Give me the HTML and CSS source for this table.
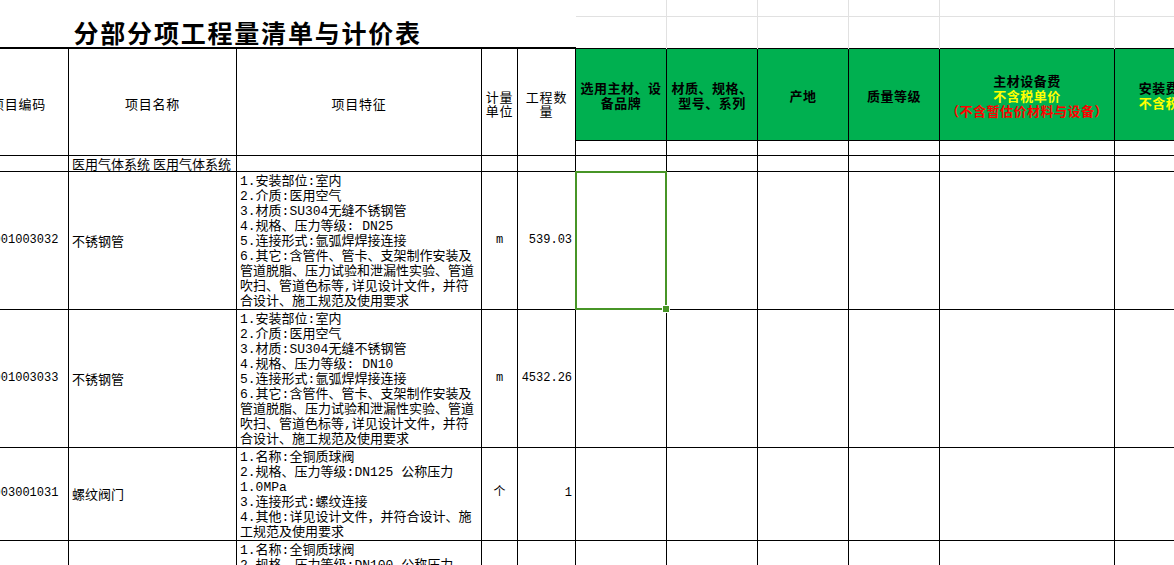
FILE: index.html
```html
<!DOCTYPE html>
<html lang="zh-CN">
<head>
<meta charset="utf-8">
<title>分部分项工程量清单与计价表</title>
<link rel="stylesheet" href="styles.css">
</head>
<body>
<table class="sheet">
  <colgroup>
    <col class="c-code"><col class="c-name"><col class="c-feat"><col class="c-unit"><col class="c-qty">
    <col class="c-g"><col class="c-g"><col class="c-g"><col class="c-g"><col class="c-wide"><col class="c-last">
  </colgroup>
  <tr class="r-top0">
    <td class="title" colspan="5" rowspan="2">分部分项工程量清单与计价表</td>
    <td class="grid g0 first"></td><td class="grid g0"></td><td class="grid g0"></td><td class="grid g0"></td><td class="grid g0"></td><td class="grid g0"></td>
  </tr>
  <tr class="r-top1">
    <td class="grid g1 first"></td><td class="grid g1"></td><td class="grid g1"></td><td class="grid g1"></td><td class="grid g1"></td><td class="grid g1"></td>
  </tr>
  <tr class="r-head">
    <td class="hd" rowspan="2">项目编码</td>
    <td class="hd" rowspan="2">项目名称</td>
    <td class="hd" rowspan="2">项目特征</td>
    <td class="hd narrow" rowspan="2">计量<br>单位</td>
    <td class="hd narrow" rowspan="2">工程数<br>量</td>
    <td class="gh">选用主材、设<br>备品牌</td>
    <td class="gh">材质、规格、<br>型号、系列</td>
    <td class="gh">产地</td>
    <td class="gh">质量等级</td>
    <td class="gh">主材设备费<br><span class="yel">不含税单价</span><br><span class="red">（不含暂估价材料与设备）</span></td>
    <td class="gh">安装费单价<br><span class="yel">不含税单价</span></td>
  </tr>
  <tr class="r-sub">
    <td class="cell"></td><td class="cell"></td><td class="cell"></td><td class="cell"></td><td class="cell"></td><td class="cell"></td>
  </tr>
  <tr class="r-group">
    <td class="cell"></td>
    <td class="cell txt">医用气体系统 医用气体系统</td>
    <td class="cell"></td><td class="cell"></td><td class="cell"></td>
    <td class="cell"></td><td class="cell"></td><td class="cell"></td><td class="cell"></td><td class="cell"></td><td class="cell"></td>
  </tr>
  <tr class="r-tall">
    <td class="cell code">031001003032</td>
    <td class="cell txt">不锈钢管</td>
    <td class="cell feat">1.安装部位:室内<br>2.介质:医用空气<br>3.材质:SU304无缝不锈钢管<br>4.规格、压力等级: DN25<br>5.连接形式:氩弧焊焊接连接<br>6.其它:含管件、管卡、支架制作安装及<br>管道脱脂、压力试验和泄漏性实验、管道<br>吹扫、管道色标等,详见设计文件，并符<br>合设计、施工规范及使用要求</td>
    <td class="cell ctr">m</td>
    <td class="cell num">539.03</td>
    <td class="cell selected"><div class="sel"></div><div class="handle"></div></td>
    <td class="cell"></td><td class="cell"></td><td class="cell"></td><td class="cell"></td><td class="cell"></td>
  </tr>
  <tr class="r-tall">
    <td class="cell code">031001003033</td>
    <td class="cell txt">不锈钢管</td>
    <td class="cell feat">1.安装部位:室内<br>2.介质:医用空气<br>3.材质:SU304无缝不锈钢管<br>4.规格、压力等级: DN10<br>5.连接形式:氩弧焊焊接连接<br>6.其它:含管件、管卡、支架制作安装及<br>管道脱脂、压力试验和泄漏性实验、管道<br>吹扫、管道色标等,详见设计文件，并符<br>合设计、施工规范及使用要求</td>
    <td class="cell ctr">m</td>
    <td class="cell num">4532.26</td>
    <td class="cell"></td><td class="cell"></td><td class="cell"></td><td class="cell"></td><td class="cell"></td><td class="cell"></td>
  </tr>
  <tr class="r-mid">
    <td class="cell code">031003001031</td>
    <td class="cell txt">螺纹阀门</td>
    <td class="cell feat">1.名称:全铜质球阀<br>2.规格、压力等级:DN125 公称压力<br>1.0MPa<br>3.连接形式:螺纹连接<br>4.其他:详见设计文件，并符合设计、施<br>工规范及使用要求</td>
    <td class="cell ctr">个</td>
    <td class="cell num">1</td>
    <td class="cell"></td><td class="cell"></td><td class="cell"></td><td class="cell"></td><td class="cell"></td><td class="cell"></td>
  </tr>
  <tr class="r-mid">
    <td class="cell code">031003001032</td>
    <td class="cell txt">螺纹阀门</td>
    <td class="cell feat">1.名称:全铜质球阀<br>2.规格、压力等级:DN100 公称压力<br>1.0MPa<br>3.连接形式:螺纹连接<br>4.其他:详见设计文件，并符合设计、施<br>工规范及使用要求</td>
    <td class="cell ctr">个</td>
    <td class="cell num">2</td>
    <td class="cell"></td><td class="cell"></td><td class="cell"></td><td class="cell"></td><td class="cell"></td><td class="cell"></td>
  </tr>
</table>
</body>
</html>
```

FILE: styles.css
```css
html, body {
  margin: 0;
  padding: 0;
  background: #fff;
  overflow: hidden;
}
body {
  width: 1174px;
  height: 565px;
  font-family: "Liberation Mono", "Noto Sans CJK SC", monospace;
  font-size: 13px;
  color: #000;
}
.sheet {
  border-collapse: collapse;
  table-layout: fixed;
  margin-left: -32px;
  width: 1262px;
}
.sheet td {
  padding: 0;
  overflow: hidden;
  white-space: nowrap;
}
.c-code { width: 100px; }
.c-name { width: 168px; }
.c-feat { width: 245px; }
.c-unit { width: 36px; }
.c-qty { width: 58px; }
.c-g { width: 91px; }
.c-wide { width: 175px; }
.c-last { width: 116px; }

.r-top0 { height: 16px; }
.r-top1 { height: 32px; }
.r-head { height: 92px; }
.r-sub { height: 15px; }
.r-group { height: 15px; }
.r-tall { height: 138px; }
.r-mid { height: 92px; }

.title {
  font-family: "Noto Sans CJK SC", sans-serif;
  font-weight: 700;
  font-size: 25px;
  letter-spacing: 1.8px;
  line-height: 28px;
  vertical-align: bottom;
  padding-left: 105px !important;
  padding-bottom: 1px !important;
  text-align: left;
}
.grid {
  border-left: 1px solid #e1e1e1;
  border-right: 1px solid #e1e1e1;
}
.grid.first { border-left: none; }
.g0 { border-bottom: 1px solid #e1e1e1; }

.hd {
  border: 1px solid #000;
  border-top: 2px solid #000;
  font-family: "Noto Sans CJK SC", sans-serif;
  font-size: 13px;
  letter-spacing: 0.8px;
  line-height: 14px;
  text-align: center;
  vertical-align: middle;
  padding-top: 4px !important;
}
.gh {
  border: 1px solid #000;
  background: #00b050;
  font-family: "Noto Sans CJK SC", sans-serif;
  font-weight: 700;
  font-size: 13px;
  letter-spacing: 0.5px;
  line-height: 15px;
  text-align: center;
  vertical-align: middle;
  padding-top: 2px !important;
}
.yel { color: #ffff00; }
.red { color: #ff0000; }

.cell {
  border: 1px solid #000;
  vertical-align: middle;
  line-height: 15px;
}
.txt {
  padding-left: 3px !important;
  text-align: left;
  font-family: "Noto Sans CJK SC", sans-serif;
}
.code {
  padding-left: 3px !important;
  text-align: left;
  font-size: 12px;
}
.feat {
  padding-left: 3px !important;
  padding-top: 2px !important;
  text-align: left;
}
.ctr { text-align: center; font-size: 12px; }
.num {
  text-align: right;
  padding-right: 3px !important;
  font-size: 12px;
}
.sheet td.selected {
  position: relative;
  overflow: visible;
}
.sel {
  position: absolute;
  left: -1px;
  top: -1px;
  right: -1px;
  bottom: -1px;
  border: 2px solid #479526;
}
.handle {
  position: absolute;
  right: -4px;
  bottom: -4px;
  width: 6px;
  height: 6px;
  background: #479526;
  border: 1px solid #fff;
}
```
